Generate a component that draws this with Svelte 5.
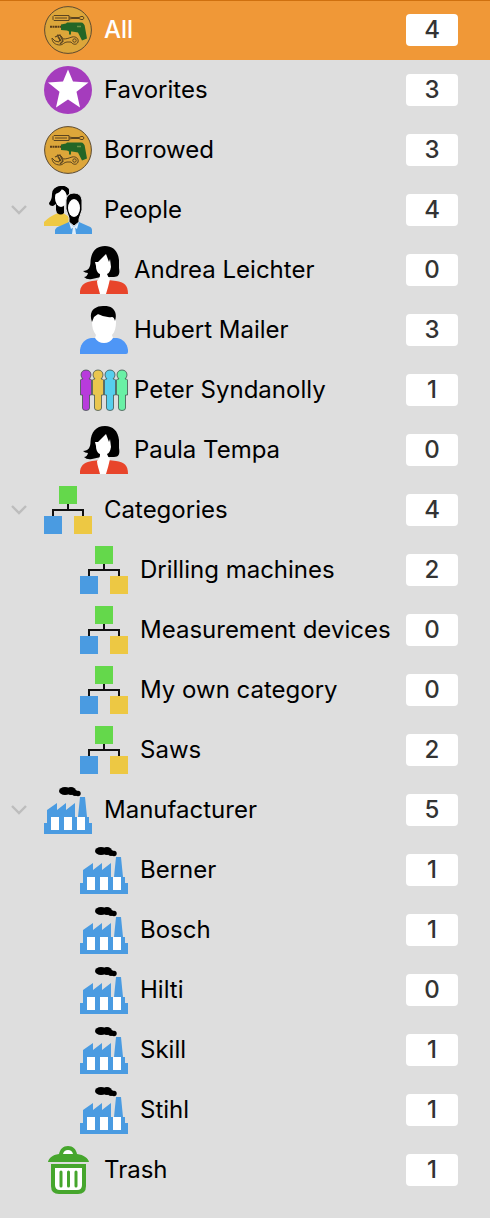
<script>
    let selected = $state("all");
    let collapsed = $state({});

    const groups = [
        { id: "all", label: "All", icon: "tools", count: 4 },
        { id: "favorites", label: "Favorites", icon: "star", count: 3 },
        { id: "borrowed", label: "Borrowed", icon: "tools", count: 3 },
        {
            id: "people",
            label: "People",
            icon: "people",
            count: 4,
            children: [
                { id: "andrea", label: "Andrea Leichter", icon: "woman", count: 0 },
                { id: "hubert", label: "Hubert Mailer", icon: "man", count: 3 },
                { id: "peter", label: "Peter Syndanolly", icon: "team", count: 1 },
                { id: "paula", label: "Paula Tempa", icon: "woman", count: 0 },
            ],
        },
        {
            id: "categories",
            label: "Categories",
            icon: "category",
            count: 4,
            children: [
                { id: "drilling", label: "Drilling machines", icon: "category", count: 2 },
                { id: "measurement", label: "Measurement devices", icon: "category", count: 0 },
                { id: "own", label: "My own category", icon: "category", count: 0 },
                { id: "saws", label: "Saws", icon: "category", count: 2 },
            ],
        },
        {
            id: "manufacturer",
            label: "Manufacturer",
            icon: "factory",
            count: 5,
            children: [
                { id: "berner", label: "Berner", icon: "factory", count: 1 },
                { id: "bosch", label: "Bosch", icon: "factory", count: 1 },
                { id: "hilti", label: "Hilti", icon: "factory", count: 0 },
                { id: "skill", label: "Skill", icon: "factory", count: 1 },
                { id: "stihl", label: "Stihl", icon: "factory", count: 1 },
            ],
        },
        { id: "trash", label: "Trash", icon: "trash", count: 1 },
    ];

    const teamColors = ["#b83bdc", "#e9c64e", "#57cfee", "#69f0a5"];

    const toggle = (id) => {
        collapsed[id] = !collapsed[id];
    };
</script>

{#snippet icon(name)}
    <svg class="icon" viewBox="0 0 48 48" aria-hidden="true">
        {#if name === "tools"}
            <circle cx="24" cy="24" r="23.4" fill="#dda63a" stroke="#5c4a30" stroke-width="1" />
            <g fill="none" stroke="#5c4520" stroke-width="1">
                <!-- screwdriver -->
                <path d="M10 9.500h15v5H10l-1-1v-3zM11 12h12M25 11l3 .5h7M25 13l3-.5h7M35 11.500l2-1h2l1 1.500-1 1.500h-2l-2-1z" />
                <!-- wrench -->
                <path d="M13 29l3 4-1 3-4-1-3-3c0 4 3 7 8 7 3 0 4-3 7-3h4c2 3 6 3 7 0s-2-6-6-5c-3 1-5 2-9 2-1-3-3-4-6-4z" />
                <circle cx="30.500" cy="34.500" r="1.700" />
                <path d="M11 31l5-2 3 6-3 3M14 31l3 4" stroke-width="1.300" />
            </g>
            <!-- drill -->
            <path d="M6 20.800h12" stroke="#5a3c18" stroke-width="2" stroke-dasharray="2 .5" />
            <path d="M17 18.500l5-1 1-1h14c2 0 4 2 4 5l2 11-5 2-4-8-6-1h-1v3h-2v-3l-2-1-6-.5z" fill="#236626" />
            <path d="M33 20.500h4" stroke="#6f9447" stroke-width="1.500" />
        {:else if name === "star"}
            <circle cx="24" cy="24" r="24" fill="#a53cbd" />
            <path d="M24 3.500l5 12 15.500 1-12 9.300L36 41.500l-12-8-12 8 3.500-15.700L4 16.500l15-1z" fill="#fff" />
        {:else if name === "people"}
            <path d="M0 40v-4q6-6 14-9h5l8 5v8z" fill="#efc944" />
            <path d="M17 0q-9 1-9 8 0 6-3 9 0 3 4 3l3-2v6l1 3q4 3 7 0V13l5-5V4q-3-5-8-4z" fill="#000" />
            <ellipse cx="17" cy="12" rx="6" ry="9" fill="#fff" />
            <path d="M11 8q5-1 7-5l6 4 1-4q-3-3-8-3-7 0-8 8z" fill="#000" />
            <path d="M22 23V14q1-7 8-7t8 7v10l-3 9v3l-5 4-5-4v-4z" fill="#000" stroke="#dedede" stroke-width="1" />
            <ellipse cx="30" cy="22" rx="6" ry="9" fill="#fff" />
            <path d="M24 17q2-5 6-5t6 5v-4l-6-3-6 3z" fill="#000" />
            <path d="M11 48v-4q1-3 5-4l9-4 5 5 5-5 9 4q4 1 4 4v4z" fill="#499be2" />
            <path d="M25 36l5 5-3 2zM35 36l-5 5 3 2z" fill="#dff0ff" />
            <path d="M29 41h2l1 7h-4z" fill="#dfeefa" />
        {:else if name === "woman"}
            <path d="M25 0c-9 0-14 6-14.500 16 0 5-2 9-7.500 9q2 2 5 2-1 4-4 4 3 3 8 2l9-2h13c5 0 6-3 5-9V14C38 5 33 0 25 0z" fill="#000" />
            <path d="M0 48v-3c1-7 6-9 12-10l8-1h8l8 1c8 1 12 4 12 13z" fill="#e8452b" />
            <path d="M15 16h3l8-8 3 8 1-3 1 8q-1 6-4 7 1 3 3 5-2 9-4 15h-6c-1-5-3-9-3-13 3-3 3-5 3-7-3-1-4-5-4-8z" fill="#fff" />
        {:else if name === "man"}
            <path d="M0 48v-4c1-7 5-11 11-12h26c6 1 10 5 11 12v2q0 2-2 2z" fill="#4e96f6" />
            <path d="M13 9h23v7c0 5-1 10-4 13l1 3q-3 5-9 5t-9-5l1-3c-3-4-4-8-4-13z" fill="#fff" />
            <path d="M12 16C8 5 15 0 23 0c10-1 15 6 12 15q-1-4-3-4-7 1-14-3l-4 3z" fill="#000" />
        {:else if name === "team"}
            {#each teamColors as color, i}
                <path
                    transform="translate({i * 12} 0)"
                    d="M6 4c-3 0-5 2-5 5q0 2 2 4H1.500L.5 14v15h2v13q0 2.500 3.500 2.500T9.500 42V29h2V14l-1-1H9q2-2 2-4c0-3-2-5-5-5z"
                    fill={color}
                    stroke="#42564f"
                    stroke-width=".8"
                />
            {/each}
        {:else if name === "category"}
            <path d="M24 18v6M9 30v-6h30v6" fill="none" stroke="#111" stroke-width="2" />
            <path d="M15 0h18v18H15z" fill="#64d84b" />
            <path d="M0 30h18v18H0z" fill="#4a9be1" />
            <path d="M30 30h18v18H30z" fill="#edc843" />
        {:else if name === "factory"}
            <path d="M0 48V37h3V24l10-7v7l9-7v7l9-7v14h3l2-20h5l2 20h2v6h3v11z" fill="#4a9be1" />
            <path d="M7 31h8v13H7zM20 31h8v13h-8zM33 31h8v13h-8z" fill="#fff" />
            <ellipse cx="21" cy="5" rx="6" ry="4" />
            <ellipse cx="27" cy="5" rx="5" ry="4" />
            <circle cx="31" cy="7" r="3" />
            <circle cx="34" cy="7.500" r="2.700" />
        {:else if name === "trash"}
            <path d="M15 8c1-5 4-8 9-8s8 3 9 8c7 1 11 4 12 8H4c1-4 4-7 11-8z" fill="#46a62d" />
            <path d="M19 8q1-4 5-4t5 4z" fill="#fff" />
            <path d="M7 18h35v22q0 8-8 8H15q-8 0-8-8z" fill="#46a62d" />
            <path d="M11 22h27v17q0 5-5 5H16q-5 0-5-5z" fill="#fff" />
            <path d="M17 26v14M24.500 26v14M32 26v14" stroke="#46a62d" stroke-width="3" stroke-linecap="round" />
        {/if}
    </svg>
{/snippet}

{#snippet entry(item)}
    <button
        class="entry"
        class:compact={["woman", "man", "team"].includes(item.icon)}
        aria-current={selected === item.id ? "true" : undefined}
        onclick={() => (selected = item.id)}
    >
        {@render icon(item.icon)}
        <span class="label">{item.label}</span>
        <span class="count">{item.count}</span>
    </button>
{/snippet}

<nav class="sidebar" aria-label="Library">
    <ul>
        {#each groups as group (group.id)}
            <li>
                <div class="row" class:selected={selected === group.id}>
                    {#if group.children}
                        <button
                            class="toggle"
                            class:closed={collapsed[group.id]}
                            aria-label="Toggle {group.label}"
                            aria-expanded={!collapsed[group.id]}
                            onclick={() => toggle(group.id)}
                        >
                            <svg viewBox="0 0 18 12" width="18" height="12">
                                <path d="M2 2l7 7 7-7" fill="none" stroke="#bdbdbd" stroke-width="2.400" />
                            </svg>
                        </button>
                    {/if}
                    {@render entry(group)}
                </div>
                {#if group.children && !collapsed[group.id]}
                    <ul>
                        {#each group.children as child (child.id)}
                            <li class="row child" class:selected={selected === child.id}>
                                {@render entry(child)}
                            </li>
                        {/each}
                    </ul>
                {/if}
            </li>
        {/each}
    </ul>
</nav>

<style>
    :global(body) {
        margin: 0;
        background: #dedede;
    }

    .sidebar {
        min-height: 100vh;
        background: #dedede;
        font-family: Inter, "Liberation Sans", sans-serif;
        font-size: 24px;
        color: #000;
    }

    ul {
        list-style: none;
        margin: 0;
        padding: 0;
    }

    .row {
        display: grid;
        grid-template-columns: 38px 1fr;
        height: 60px;
    }

    .row.child {
        grid-template-columns: 74px 1fr;
    }

    .row.selected {
        background: #f09837;
        box-shadow: inset 0 1px #cf700f;
        color: #fff;
        font-weight: 500;
    }

    button {
        padding: 0;
        border: none;
        background: none;
        color: inherit;
        font: inherit;
        cursor: pointer;
    }

    .toggle {
        display: flex;
        align-items: center;
        justify-content: center;
    }

    .toggle.closed svg {
        transform: rotate(-90deg);
    }

    .entry {
        grid-column: 2;
        display: flex;
        align-items: center;
        gap: 12px;
        min-width: 0;
        padding: 0 32px 0 6px;
        text-align: left;
    }

    .entry.compact {
        gap: 6px;
    }

    .icon {
        flex: none;
        width: 48px;
        height: 48px;
    }

    .label {
        flex: 1;
        padding-bottom: 2px;
        white-space: nowrap;
    }

    .count {
        flex: none;
        width: 52px;
        border-radius: 4px;
        background: #fff;
        color: #333;
        font-weight: 500;
        line-height: 32px;
        text-align: center;
    }
</style>
